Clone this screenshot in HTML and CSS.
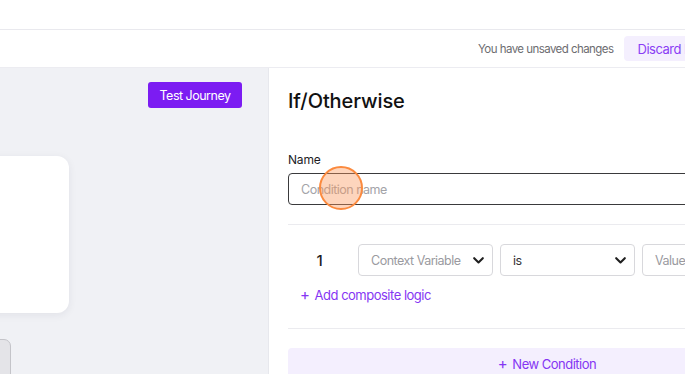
FILE: index.html
```html
<!DOCTYPE html>
<html lang="en">
<head>
<meta charset="utf-8">
<title>If/Otherwise</title>
<link rel="stylesheet" href="styles.css">
</head>
<body>
<div class="app">
  <header class="topbar"></header>
  <div class="subbar">
    <span class="unsaved">You have unsaved changes</span>
    <button class="btn-discard">Discard Draft</button>
    <button class="btn-publish">Publish</button>
  </div>
  <main class="main">
    <section class="canvas">
      <div class="canvas-toolbar">
        <button class="btn-test">Test Journey</button>
      </div>
      <div class="node node-card"></div>
      <div class="node node-grey"></div>
    </section>
    <section class="panel">
      <h1 class="panel-title">If/Otherwise</h1>
      <label class="field-label" for="cond-name">Name</label>
      <input id="cond-name" class="text-input" type="text" placeholder="Condition name">
      <div class="divider"></div>
      <div class="cond-row">
        <span class="cond-num">1</span>
        <div class="select placeholder">
          <span>Context Variable</span>
          <svg class="chev" width="11" height="7" viewBox="0 0 11 7"><path d="M1.2 1.2 L5.5 5.4 L9.8 1.2" fill="none" stroke="#1f1f1f" stroke-width="2.1" stroke-linecap="round" stroke-linejoin="round"/></svg>
        </div>
        <div class="select">
          <span>is</span>
          <svg class="chev" width="11" height="7" viewBox="0 0 11 7"><path d="M1.2 1.2 L5.5 5.4 L9.8 1.2" fill="none" stroke="#1f1f1f" stroke-width="2.1" stroke-linecap="round" stroke-linejoin="round"/></svg>
        </div>
        <div class="select placeholder value">
          <span>Value</span>
        </div>
      </div>
      <a class="add-logic" href="#"><span class="plus">+</span> Add composite logic</a>
      <div class="divider divider-2"></div>
      <button class="btn-new"><span class="plus">+</span> New Condition</button>
    </section>
  </main>
  <div class="cursor-dot"></div>
</div>
</body>
</html>
```

FILE: styles.css
```css
* { box-sizing: border-box; }
html, body {
  margin: 0;
  padding: 0;
  width: 685px;
  height: 374px;
  overflow: hidden;
  background: #ffffff;
}
body {
  font-family: Inter, "Noto Sans", sans-serif;
  color: #1d1d1f;
}
.app {
  position: relative;
  width: 825px;
  height: 374px;
  display: flex;
  flex-direction: column;
}
.topbar {
  height: 30px;
  flex: none;
  border-bottom: 1px solid #e9e9ee;
  background: #fff;
}
.subbar {
  height: 38px;
  flex: none;
  display: flex;
  align-items: center;
  justify-content: flex-start;
  padding-left: 478px;
  border-bottom: 1px solid #ececf1;
  background: #fff;
  white-space: nowrap;
}
.unsaved {
  flex: none;
  font-size: 11.5px;
  color: #6c6c70;
  letter-spacing: -0.55px;
}
.btn-discard {
  flex: none;
  margin-left: 10px;
  height: 25px;
  padding: 0 14px;
  border: none;
  border-radius: 4px;
  background: #f4effe;
  color: #8a3df5;
  font-family: inherit;
  font-size: 13px;
  letter-spacing: -0.5px;
  white-space: nowrap;
}
.btn-publish {
  flex: none;
  margin-left: 8px;
  height: 25px;
  padding: 0 14px;
  border: none;
  border-radius: 4px;
  background: #7c1cf2;
  color: #fff;
  font-family: inherit;
  font-size: 13px;
  white-space: nowrap;
}
.main {
  flex: 1;
  display: flex;
  min-height: 0;
}
.canvas {
  position: relative;
  flex: none;
  width: 269px;
  background: #f0f1f5;
  border-right: 1px solid #e7e8ed;
  overflow: hidden;
}
.canvas-toolbar {
  display: flex;
  justify-content: flex-end;
  padding: 14px 26px 0 0;
}
.btn-test {
  width: 94px;
  height: 26px;
  padding: 0;
  border: none;
  border-radius: 3px;
  background: #7c1cf2;
  color: #fff;
  font-family: inherit;
  font-size: 12.5px;
  letter-spacing: -0.5px;
  white-space: nowrap;
}
.node {
  position: absolute;
}
.node-card {
  left: -100px;
  top: 88px;
  width: 169px;
  height: 157px;
  background: #fff;
  border-radius: 12px;
  box-shadow: 0 2px 8px rgba(30, 30, 60, 0.07);
}
.node-grey {
  left: -100px;
  top: 271px;
  width: 111px;
  height: 80px;
  background: #e4e4e8;
  border: 1px solid #c4c4c9;
  border-radius: 7px;
}
.panel {
  flex: none;
  width: 556px;
  padding: 19px 19px 0 19px;
  background: #fff;
  display: flex;
  flex-direction: column;
}
.panel-title {
  margin: 0;
  font-size: 20px;
  line-height: 28px;
  font-weight: 500;
  color: #111;
  letter-spacing: -0.1px;
}
.field-label {
  margin-top: 37px;
  font-size: 12px;
  line-height: 16px;
  color: #1d1d1f;
  letter-spacing: -0.2px;
}
.text-input {
  flex: none;
  margin-top: 5px;
  height: 32px;
  padding: 0 12px;
  border: 1px solid #3a3a3c;
  border-radius: 4px;
  font-family: inherit;
  font-size: 12.5px;
  letter-spacing: -0.5px;
  color: #1d1d1f;
  outline: none;
}
.text-input::placeholder {
  color: #a3a3a8;
}
.divider {
  flex: none;
  margin-top: 19px;
  border-top: 1px solid #ebebef;
}
.cond-row {
  margin-top: 19px;
  display: flex;
  align-items: center;
  gap: 7px;
}
.cond-num {
  width: 63px;
  text-align: center;
  font-size: 15px;
  font-weight: 500;
  color: #1d1d1f;
}
.select {
  flex: none;
  width: 135px;
  height: 32px;
  padding: 0 8px 0 12px;
  border: 1px solid #d8d8dc;
  border-radius: 4px;
  display: flex;
  align-items: center;
  justify-content: space-between;
  font-size: 12.5px;
  letter-spacing: -0.5px;
  color: #333336;
  white-space: nowrap;
}
.select.placeholder {
  color: #9a9aa0;
}
.select.value {
  width: 160px;
}
.chev {
  flex: none;
}
.add-logic {
  margin-top: 11px;
  padding-left: 12px;
  font-size: 13px;
  line-height: 16px;
  color: #8536f3;
  text-decoration: none;
  letter-spacing: -0.5px;
}
.plus {
  font-size: 15px;
  font-weight: 400;
  margin-right: 2px;
}
.divider-2 {
  margin-top: 25px;
}
.btn-new {
  flex: none;
  margin-top: 19px;
  height: 30px;
  border: none;
  border-radius: 4px;
  background: #f4effe;
  color: #8536f3;
  font-family: inherit;
  font-size: 13px;
  letter-spacing: -0.5px;
}
.cursor-dot {
  position: absolute;
  left: 319px;
  top: 166px;
  width: 44px;
  height: 44px;
  border-radius: 50%;
  border: 2px solid #fb8a3e;
  background: rgba(251, 150, 90, 0.4);
  pointer-events: none;
}
```
